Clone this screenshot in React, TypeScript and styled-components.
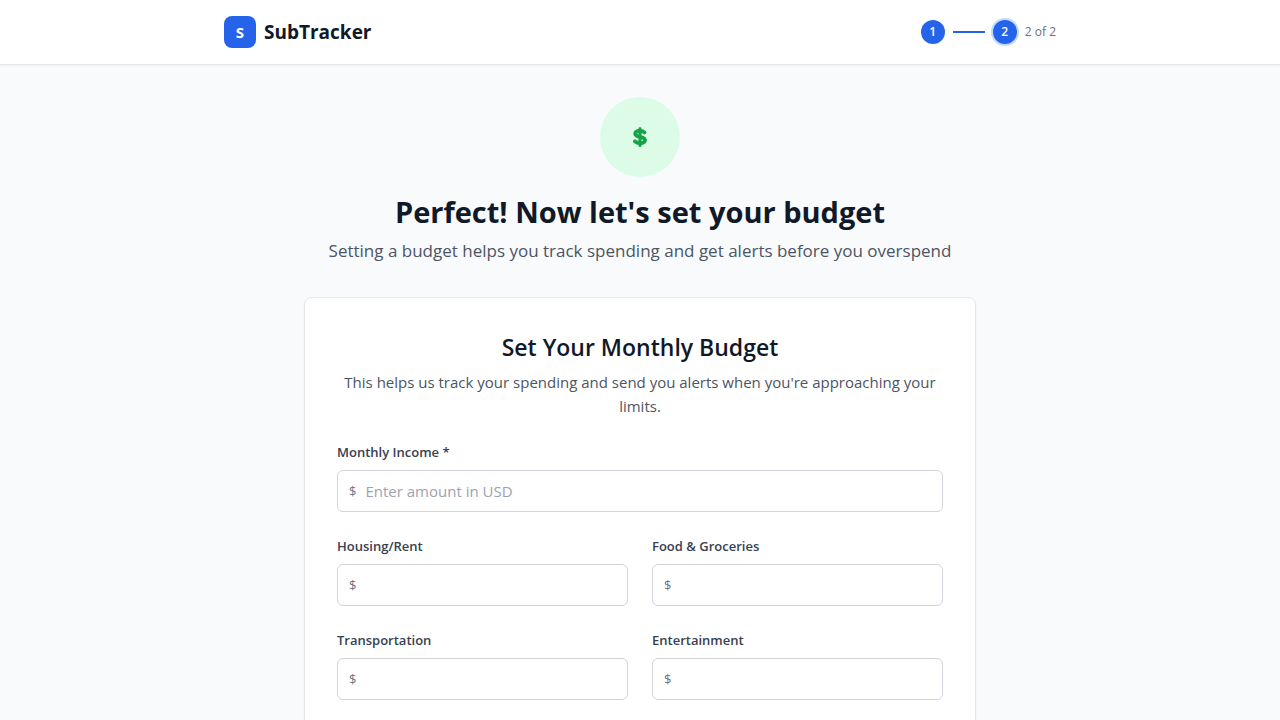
import React from "react";
import styled, { createGlobalStyle } from "styled-components";

const GlobalStyle = createGlobalStyle`
  *, *::before, *::after { box-sizing: border-box; }
  body {
    margin: 0;
    background: #f9fafb;
    color: #111827;
    font-family: "Segoe UI", "Open Sans", "Noto Sans", sans-serif;
    font-size: 15px;
    line-height: 24px;
  }
  h1, h2, p { margin: 0; }
`;

const Header = styled.header`
  background: #ffffff;
  border-bottom: 1px solid #e5e7eb;
  box-shadow: 0 1px 2px rgba(0, 0, 0, 0.05);
`;

const HeaderInner = styled.div`
  max-width: 896px;
  margin: 0 auto;
  padding: 16px 32px;
  display: flex;
  align-items: center;
  justify-content: space-between;
`;

const Brand = styled.div`
  display: flex;
  align-items: center;
  gap: 8px;
`;

const BrandMark = styled.span`
  display: flex;
  align-items: center;
  justify-content: center;
  width: 32px;
  height: 32px;
  border-radius: 8px;
  background: #2563eb;
  color: #ffffff;
  font-size: 15px;
  line-height: 20px;
  font-weight: 700;
`;

const BrandName = styled.span`
  font-size: 19px;
  line-height: 30px;
  font-weight: 700;
`;

const Steps = styled.div`
  display: flex;
  align-items: center;
  gap: 8px;
`;

const StepDot = styled.span<{ $current?: boolean }>`
  display: flex;
  align-items: center;
  justify-content: center;
  width: 24px;
  height: 24px;
  border-radius: 50%;
  background: #2563eb;
  color: #ffffff;
  font-size: 12px;
  line-height: 16px;
  font-weight: 600;
  box-shadow: ${(p) => (p.$current ? "0 0 0 2px #bfdbfe" : "none")};
`;

const StepLine = styled.span`
  width: 32px;
  height: 2px;
  background: #2563eb;
`;

const StepCount = styled.span`
  color: #6b7280;
  font-size: 12px;
  line-height: 16px;
`;

const Main = styled.main`
  max-width: 736px;
  margin: 0 auto;
  padding: 32px;
`;

const Intro = styled.section`
  display: flex;
  flex-direction: column;
  align-items: center;
  margin-bottom: 32px;
  text-align: center;
`;

const IntroIcon = styled.div`
  display: flex;
  align-items: center;
  justify-content: center;
  width: 80px;
  height: 80px;
  margin-bottom: 16px;
  border-radius: 50%;
  background: #dcfce7;
  color: #16a34a;
`;

const Title = styled.h1`
  margin-bottom: 6px;
  font-size: 29px;
  line-height: 38px;
  font-weight: 700;
`;

const Subtitle = styled.p`
  color: #4b5563;
  font-size: 17px;
  line-height: 28px;
`;

const Card = styled.form`
  padding: 32px;
  background: #ffffff;
  border: 1px solid #e5e7eb;
  border-radius: 8px;
  box-shadow: 0 1px 2px rgba(0, 0, 0, 0.05);
`;

const CardHead = styled.div`
  margin-bottom: 24px;
  text-align: center;
`;

const CardTitle = styled.h2`
  margin-bottom: 6px;
  font-size: 23px;
  line-height: 34px;
  font-weight: 600;
`;

const CardText = styled.p`
  color: #4b5563;
`;

const Fields = styled.div`
  display: grid;
  grid-template-columns: 1fr 1fr;
  gap: 24px;
`;

const FieldBox = styled.div<{ $wide?: boolean }>`
  grid-column: ${(p) => (p.$wide ? "1 / -1" : "auto")};
  display: flex;
  flex-direction: column;
  gap: 8px;
`;

const Label = styled.label`
  color: #374151;
  font-size: 13px;
  line-height: 20px;
  font-weight: 600;
`;

const InputShell = styled.div`
  display: flex;
  align-items: center;
  gap: 9px;
  height: 42px;
  padding: 0 11px;
  border: 1px solid #d1d5db;
  border-radius: 6px;
  background: #ffffff;
  &:focus-within { border-color: #2563eb; }
`;

const Currency = styled.span`
  color: #6b7280;
  font-size: 13px;
  line-height: 20px;
`;

const Input = styled.input`
  flex: 1;
  min-width: 0;
  padding: 0;
  border: 0;
  outline: 0;
  background: transparent;
  color: #111827;
  font: inherit;
  &::placeholder { color: #9ca3af; opacity: 1; }
`;

const fields = [
  { id: "income", label: "Monthly Income *", placeholder: "Enter amount in USD", wide: true },
  { id: "housing", label: "Housing/Rent" },
  { id: "food", label: "Food & Groceries" },
  { id: "transport", label: "Transportation" },
  { id: "entertainment", label: "Entertainment" },
];

function DollarIcon() {
  return (
    <svg width="14" height="20" viewBox="0 0 14 20" fill="none" stroke="currentColor" strokeLinecap="round" aria-hidden="true">
      <path d="M7 1.5V18.5" strokeWidth="3" />
      <path d="M11.4 5.4C10.4 4.4 9 4 7 4C4 4 2.200 5 2.200 6.800C2.200 8.900 4.400 9.400 7 9.900C9.800 10.400 12 11.100 12 13.200C12 15.300 9.800 16 7 16C4.800 16 3.100 15.500 1.900 14.300" strokeWidth="3.8" />
    </svg>
  );
}

export default function App() {
  return (
    <>
      <GlobalStyle />
      <Header>
        <HeaderInner>
          <Brand>
            <BrandMark>S</BrandMark>
            <BrandName>SubTracker</BrandName>
          </Brand>
          <Steps>
            <StepDot>1</StepDot>
            <StepLine />
            <StepDot $current>2</StepDot>
            <StepCount>2 of 2</StepCount>
          </Steps>
        </HeaderInner>
      </Header>
      <Main>
        <Intro>
          <IntroIcon>
            <DollarIcon />
          </IntroIcon>
          <Title>Perfect! Now let's set your budget</Title>
          <Subtitle>Setting a budget helps you track spending and get alerts before you overspend</Subtitle>
        </Intro>
        <Card>
          <CardHead>
            <CardTitle>Set Your Monthly Budget</CardTitle>
            <CardText>
              This helps us track your spending and send you alerts when you're approaching your limits.
            </CardText>
          </CardHead>
          <Fields>
            {fields.map((f) => (
              <FieldBox key={f.id} $wide={f.wide}>
                <Label htmlFor={f.id}>{f.label}</Label>
                <InputShell>
                  <Currency>$</Currency>
                  <Input id={f.id} type="text" inputMode="decimal" placeholder={f.placeholder} />
                </InputShell>
              </FieldBox>
            ))}
          </Fields>
        </Card>
      </Main>
    </>
  );
}
